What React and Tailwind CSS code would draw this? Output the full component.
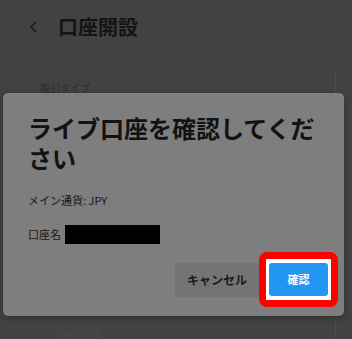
import React from "react";

const font = { fontFamily: '"Noto Sans CJK JP", "Noto Sans", sans-serif' };

export default function App() {
  return (
    <div className="relative h-[339px] w-[352px] overflow-hidden bg-[#424242]" style={font}>
      <div className="flex h-[52px] items-center gap-[18px] pl-[28px] pt-[2px]">
        <svg width="12" height="14" viewBox="0 0 12 14" className="text-[#1c1c1c]">
          <path d="M8 2 L3 7 L8 12" fill="none" stroke="currentColor" strokeWidth="1.6" />
        </svg>
        <h1 className="text-[20px] font-bold leading-none text-[#141414]">口座開設</h1>
      </div>

      <div className="mx-[16px] mt-[18px] h-[300px] border-r border-[#4c4c4c] px-[24px] pt-[10px]">
        <div className="text-[10px] text-[#2e2e2e]">取引タイプ</div>
        <div className="mt-[232px] pl-[12px] text-[10px] text-[#4a4a4a]">ライブ口座</div>
      </div>

      <div className="absolute left-[3px] top-[93px] w-[341px] rounded-[5px] bg-[#7e7e7e] pb-[9px] pl-[25px] pr-[6px] pt-[20px] shadow-[0_2px_6px_rgba(0,0,0,0.3)]">
        <h2 className="w-[292px] text-[24px] font-bold leading-[30px] text-[#121212]">
          ライブ口座を確認してください
        </h2>
        <p className="mt-[18px] text-[11px] leading-[18px] text-[#161616]">メイン通貨: JPY</p>
        <div className="mt-[16px] flex items-center gap-[4px]">
          <span className="text-[11px] text-[#161616]">口座名</span>
          <div className="h-[19px] w-[95px] bg-black" />
        </div>
        <div className="mt-[8px] flex items-center justify-end">
          <button className="h-[34px] w-[84px] rounded-[3px] bg-[#747474] text-[12px] font-bold text-[#1a1a1a]">
            キャンセル
          </button>
          <div className="rounded-[8px] border-[7px] border-[#ff0000] bg-white px-[3px] py-[4px]">
            <button className="flex h-[33px] w-[59px] items-center justify-center rounded-[3px] bg-[#2196f3] text-[11px] font-bold text-white">
              確認
            </button>
          </div>
        </div>
      </div>
    </div>
  );
}
